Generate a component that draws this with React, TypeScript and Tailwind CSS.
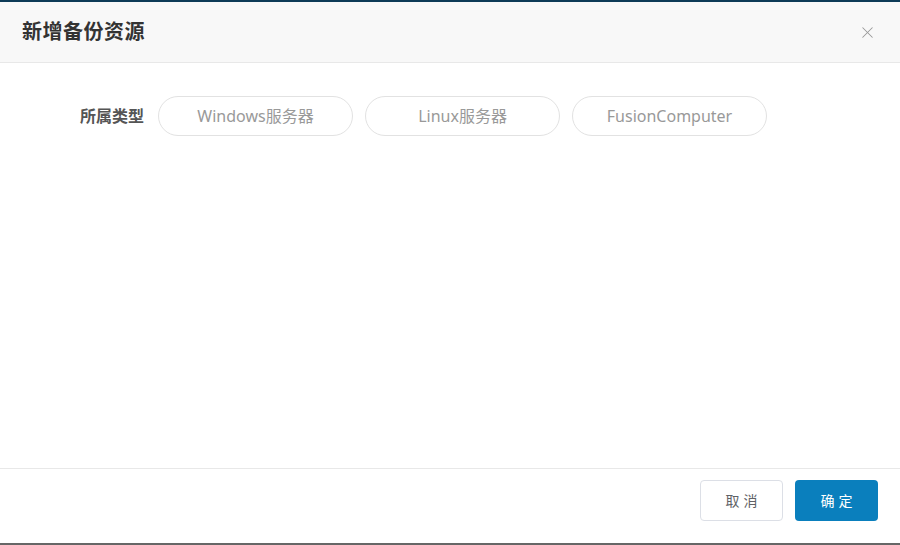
import { X } from "lucide-react"

const types = ["Windows服务器", "Linux服务器", "FusionComputer"]

const App = () => {
    return (
        <div
            className="w-[900px] h-[545px] flex flex-col bg-white border-t-2 border-[#0d3b57] border-b-2 border-b-[#666666] overflow-hidden"
            style={{ fontFamily: '"Noto Sans", "Noto Sans CJK SC", sans-serif' }}
        >
            {/* header */}
            <div className="h-[61px] shrink-0 flex items-center justify-between bg-[#f8f8f8] border-b border-[#e8e8e8] pl-[22px] pr-[23px]">
                <h2 className="text-[20px] font-bold text-[#333333] tracking-[0.5px]">新增备份资源</h2>
                <X className="w-[19px] h-[19px] text-[#999999]" strokeWidth={1.3} />
            </div>

            {/* body */}
            <div className="flex-1 pt-[33px] pl-[80px]">
                <div className="flex items-center">
                    <span className="text-[16px] font-bold text-[#555555] mr-[14px]">所属类型</span>
                    <div className="flex gap-[12px]">
                        {types.map(t => (
                            <button
                                key={t}
                                className="w-[195px] h-[40px] rounded-full border border-[#e2e2e2] bg-white text-[16px] text-[#999999]"
                            >
                                {t}
                            </button>
                        ))}
                    </div>
                </div>
            </div>

            {/* footer */}
            <div className="h-[75px] shrink-0 border-t border-[#e8e8e8] flex justify-end gap-[12px] pt-[11px] pr-[22px]">
                <button className="w-[83px] h-[41px] rounded-[4px] border border-[#dcdfe6] bg-white text-[14px] text-[#606266] tracking-[4px] pl-[4px]">
                    取消
                </button>
                <button className="w-[83px] h-[41px] rounded-[4px] bg-[#0a7fbd] text-[14px] text-white tracking-[4px] pl-[4px]">
                    确定
                </button>
            </div>
        </div>
    )
}

export default App
